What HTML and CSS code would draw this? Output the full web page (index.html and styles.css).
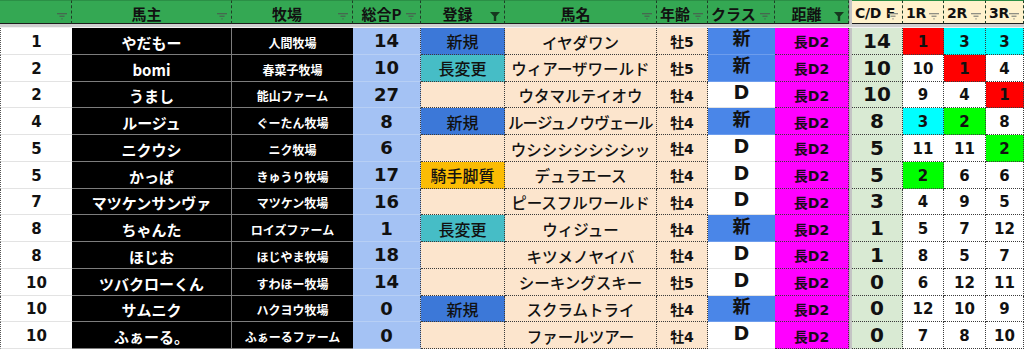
FILE: index.html
```html
<!DOCTYPE html>
<html lang="ja">
<head>
<meta charset="utf-8">
<title>ランキング</title>
<link rel="stylesheet" href="styles.css">
</head>
<body>
<div class="sheet">
  <div class="sep"></div>
  <div class="band"></div>

  <div class="h"><svg class="fi" viewBox="0 0 10 7"><rect x="0" y="0" width="10" height="1.3"/><rect x="2.5" y="2.6" width="5" height="1.3"/><rect x="4.4" y="5.2" width="1.2" height="1.3"/></svg></div>
  <div class="h">馬主<svg class="fi" viewBox="0 0 10 7"><rect x="0" y="0" width="10" height="1.3"/><rect x="2.5" y="2.6" width="5" height="1.3"/><rect x="4.4" y="5.2" width="1.2" height="1.3"/></svg></div>
  <div class="h">牧場<svg class="fi" viewBox="0 0 10 7"><rect x="0" y="0" width="10" height="1.3"/><rect x="2.5" y="2.6" width="5" height="1.3"/><rect x="4.4" y="5.2" width="1.2" height="1.3"/></svg></div>
  <div class="h">総合P<svg class="fi" viewBox="0 0 10 7"><rect x="0" y="0" width="10" height="1.3"/><rect x="2.5" y="2.6" width="5" height="1.3"/><rect x="4.4" y="5.2" width="1.2" height="1.3"/></svg></div>
  <div class="h">登録<svg class="fa" viewBox="0 0 10 9"><polygon points="0,0 10,0 6.2,4.2 6.2,9 3.8,9 3.8,4.2"/></svg></div>
  <div class="h">馬名<svg class="fi" viewBox="0 0 10 7"><rect x="0" y="0" width="10" height="1.3"/><rect x="2.5" y="2.6" width="5" height="1.3"/><rect x="4.4" y="5.2" width="1.2" height="1.3"/></svg></div>
  <div class="h h-left">年齢<svg class="fi" viewBox="0 0 10 7"><rect x="0" y="0" width="10" height="1.3"/><rect x="2.5" y="2.6" width="5" height="1.3"/><rect x="4.4" y="5.2" width="1.2" height="1.3"/></svg></div>
  <div class="h h-left">クラス<svg class="fi" viewBox="0 0 10 7"><rect x="0" y="0" width="10" height="1.3"/><rect x="2.5" y="2.6" width="5" height="1.3"/><rect x="4.4" y="5.2" width="1.2" height="1.3"/></svg></div>
  <div class="h">距離<svg class="fa" viewBox="0 0 10 9"><polygon points="0,0 10,0 6.2,4.2 6.2,9 3.8,9 3.8,4.2"/></svg></div>
  <div class="h hc h-left">C/D F<svg class="fi" viewBox="0 0 10 7"><rect x="0" y="0" width="10" height="1.3"/><rect x="2.5" y="2.6" width="5" height="1.3"/><rect x="4.4" y="5.2" width="1.2" height="1.3"/></svg></div>
  <div class="h hc h-left">1R<svg class="fi" viewBox="0 0 10 7"><rect x="0" y="0" width="10" height="1.3"/><rect x="2.5" y="2.6" width="5" height="1.3"/><rect x="4.4" y="5.2" width="1.2" height="1.3"/></svg></div>
  <div class="h hc h-left">2R<svg class="fi" viewBox="0 0 10 7"><rect x="0" y="0" width="10" height="1.3"/><rect x="2.5" y="2.6" width="5" height="1.3"/><rect x="4.4" y="5.2" width="1.2" height="1.3"/></svg></div>
  <div class="h hc h-left">3R<svg class="fi" viewBox="0 0 10 7"><rect x="0" y="0" width="10" height="1.3"/><rect x="2.5" y="2.6" width="5" height="1.3"/><rect x="4.4" y="5.2" width="1.2" height="1.3"/></svg></div>

  <!-- row 1 -->
  <div class="c rank">1</div><div class="c owner">やだもー</div><div class="c farm">人間牧場</div><div class="c pts">14</div><div class="c reg new">新規</div><div class="c name">イヤダワン</div><div class="c age">牡5</div><div class="c cls new">新</div><div class="c dist">長D2</div><div class="c cdf">14</div><div class="c r red">1</div><div class="c r cyan">3</div><div class="c r cyan">3</div>
  <!-- row 2 -->
  <div class="c rank">2</div><div class="c owner">bomi</div><div class="c farm">春菜子牧場</div><div class="c pts">10</div><div class="c reg chg">長変更</div><div class="c name">ウィアーザワールド</div><div class="c age">牡5</div><div class="c cls new">新</div><div class="c dist">長D2</div><div class="c cdf">10</div><div class="c r">10</div><div class="c r red">1</div><div class="c r">4</div>
  <!-- row 3 -->
  <div class="c rank">2</div><div class="c owner">うまし</div><div class="c farm">能山ファーム</div><div class="c pts">27</div><div class="c reg"></div><div class="c name">ウタマルテイオウ</div><div class="c age">牡4</div><div class="c cls">D</div><div class="c dist">長D2</div><div class="c cdf">10</div><div class="c r">9</div><div class="c r">4</div><div class="c r red">1</div>
  <!-- row 4 -->
  <div class="c rank">4</div><div class="c owner">ルージュ</div><div class="c farm">ぐーたん牧場</div><div class="c pts">8</div><div class="c reg new">新規</div><div class="c name long">ルージュノウヴェール</div><div class="c age">牡4</div><div class="c cls new">新</div><div class="c dist">長D2</div><div class="c cdf">8</div><div class="c r cyan">3</div><div class="c r green">2</div><div class="c r">8</div>
  <!-- row 5 -->
  <div class="c rank">5</div><div class="c owner">ニクウシ</div><div class="c farm">ニク牧場</div><div class="c pts">6</div><div class="c reg"></div><div class="c name">ウシシシシシシシッ</div><div class="c age">牡4</div><div class="c cls">D</div><div class="c dist">長D2</div><div class="c cdf">5</div><div class="c r">11</div><div class="c r">11</div><div class="c r green">2</div>
  <!-- row 6 -->
  <div class="c rank">5</div><div class="c owner">かっぱ</div><div class="c farm">きゅうり牧場</div><div class="c pts">17</div><div class="c reg jky">騎手脚質</div><div class="c name">デュラエース</div><div class="c age">牡4</div><div class="c cls">D</div><div class="c dist">長D2</div><div class="c cdf">5</div><div class="c r green">2</div><div class="c r">6</div><div class="c r">6</div>
  <!-- row 7 -->
  <div class="c rank">7</div><div class="c owner">マツケンサンヴァ</div><div class="c farm">マツケン牧場</div><div class="c pts">16</div><div class="c reg"></div><div class="c name">ピースフルワールド</div><div class="c age">牡4</div><div class="c cls">D</div><div class="c dist">長D2</div><div class="c cdf">3</div><div class="c r">4</div><div class="c r">9</div><div class="c r">5</div>
  <!-- row 8 -->
  <div class="c rank">8</div><div class="c owner">ちゃんた</div><div class="c farm">ロイズファーム</div><div class="c pts">1</div><div class="c reg chg">長変更</div><div class="c name">ウィジュー</div><div class="c age">牡4</div><div class="c cls new">新</div><div class="c dist">長D2</div><div class="c cdf">1</div><div class="c r">5</div><div class="c r">7</div><div class="c r">12</div>
  <!-- row 9 -->
  <div class="c rank">8</div><div class="c owner">ほじお</div><div class="c farm">ほじやま牧場</div><div class="c pts">18</div><div class="c reg"></div><div class="c name">キツメノヤイバ</div><div class="c age">牡4</div><div class="c cls">D</div><div class="c dist">長D2</div><div class="c cdf">1</div><div class="c r">8</div><div class="c r">5</div><div class="c r">7</div>
  <!-- row 10 -->
  <div class="c rank">10</div><div class="c owner">ツバクローくん</div><div class="c farm">すわほー牧場</div><div class="c pts">14</div><div class="c reg"></div><div class="c name">シーキングスキー</div><div class="c age">牡5</div><div class="c cls">D</div><div class="c dist">長D2</div><div class="c cdf">0</div><div class="c r">6</div><div class="c r">12</div><div class="c r">11</div>
  <!-- row 11 -->
  <div class="c rank">10</div><div class="c owner">サムニク</div><div class="c farm">ハクヨウ牧場</div><div class="c pts">0</div><div class="c reg new">新規</div><div class="c name">スクラムトライ</div><div class="c age">牡4</div><div class="c cls new">新</div><div class="c dist">長D2</div><div class="c cdf">0</div><div class="c r">12</div><div class="c r">10</div><div class="c r">9</div>
  <!-- row 12 -->
  <div class="c rank">10</div><div class="c owner">ふぁーる。</div><div class="c farm">ふぁーるファーム</div><div class="c pts">0</div><div class="c reg"></div><div class="c name">ファールツアー</div><div class="c age">牡4</div><div class="c cls">D</div><div class="c dist">長D2</div><div class="c cdf">0</div><div class="c r">7</div><div class="c r">8</div><div class="c r">10</div>
</div>
</body>
</html>
```

FILE: styles.css
```css
* { box-sizing: border-box; }

html, body {
  margin: 0;
  padding: 0;
  background: #ffffff;
}

body {
  width: 1024px;
  height: 350px;
  overflow: hidden;
  font-family: "DejaVu Sans", "Noto Sans CJK JP", sans-serif;
  color: #111111;
}

.sheet {
  display: grid;
  grid-template-columns: 72px 160px 121px 68px 84px 152px 51px 67px 74px 3px 51px 41px 42px 38px;
  grid-template-rows: 24px 4px repeat(12, 26.75px);
}

.sep {
  grid-column: 10;
  grid-row: 1 / span 14;
  background: #c4c4c4;
  border-left: 1px solid #b0b0b0;
}

.band {
  grid-column: 1 / span 14;
  grid-row: 2;
  background: #cfcfcf;
  border-bottom: 1px solid #f2f2f2;
}

/* header */
.h {
  position: relative;
  display: flex;
  align-items: center;
  justify-content: center;
  background: #34a853;
  border-top: 1px solid #2b8f46;
  border-right: 1px dashed #1f3d27;
  border-bottom: 1px solid #1c1c1c;
  font-family: "Noto Sans CJK JP", sans-serif;
  font-weight: 700;
  font-size: 15px;
  line-height: 1;
  padding-top: 2px;
  padding-right: 10px;
  white-space: nowrap;
}

.h:first-of-type {
  border-left: 1px dashed #1f3d27;
}

.h-left {
  justify-content: flex-start;
  padding-left: 3px;
}

.hc {
  background: #fff2cc;
  font-family: "DejaVu Sans", "Noto Sans CJK JP", sans-serif;
  font-size: 14px;
  letter-spacing: -0.3px;
}

.fi, .fa {
  position: absolute;
  right: 4px;
  top: 12px;
  width: 10px;
  height: 7px;
  fill: #46684f;
}

.hc .fi { fill: #8f8f84; }

.fa {
  top: 11px;
  height: 9px;
  fill: #16381f;
}

/* body cells */
.c {
  display: flex;
  align-items: center;
  justify-content: center;
  white-space: nowrap;
  overflow: hidden;
  font-weight: 700;
  line-height: 1;
  padding-top: 3px;
  border-bottom: 1px dotted #3a3a3a;
  border-right: 1px dotted #3a3a3a;
}

.rank {
  background: #ffffff;
  font-size: 15px;
  border-left: 1px dotted #555555;
  border-right: none;
  border-bottom: 1px solid #e3e3e3;
}

.owner {
  background: #000000;
  color: #ffffff;
  font-family: "Noto Sans CJK JP", sans-serif;
  font-size: 15px;
  border-bottom: 1px solid #7d7d7d;
  border-right: 1px solid #7d7d7d;
}

.farm {
  background: #000000;
  color: #ffffff;
  font-family: "Noto Sans CJK JP", sans-serif;
  font-size: 12px;
  padding-top: 4px;
  border-bottom: 1px solid #7d7d7d;
  border-right: none;
}

.pts {
  background: #a4c2f4;
  font-size: 18px;
  padding-top: 1px;
  border-bottom: 1px solid #b7cff5;
}

.reg {
  background: #fce5cd;
  font-family: "Noto Sans CJK JP", sans-serif;
  font-weight: 500;
  font-size: 16px;
  padding-top: 1px;
}

.reg.new { background: #3c78d8; }
.reg.chg { background: #46bdc6; }
.reg.jky { background: #fbbc04; }

.name {
  background: #fce5cd;
  font-family: "Noto Sans CJK JP", sans-serif;
  font-weight: 500;
  font-size: 15.5px;
}

.name.long {
  letter-spacing: -0.9px;
  justify-content: flex-start;
  padding-left: 3px;
}

.age {
  background: #fce5cd;
  font-size: 14px;
}

.cls {
  background: #ffffff;
  font-size: 19px;
  padding-top: 0;
  padding-bottom: 3px;
  border-right: none;
  border-bottom: 1px solid #e3e3e3;
}

.cls.new {
  font-size: 18px;
  background: #4a86e8;
  border-bottom: 1px solid #6d9ded;
}

.dist {
  background: #ff00ff;
  font-size: 14px;
  color: #1a0a1a;
}

.cdf {
  background: #d9ead3;
  font-size: 20px;
  padding-top: 0;
}

.r {
  background: #ffffff;
  font-size: 15px;
}

.r.red { background: #ff0000; }
.r.cyan { background: #00ffff; }
.r.green { background: #00ff00; }
```
